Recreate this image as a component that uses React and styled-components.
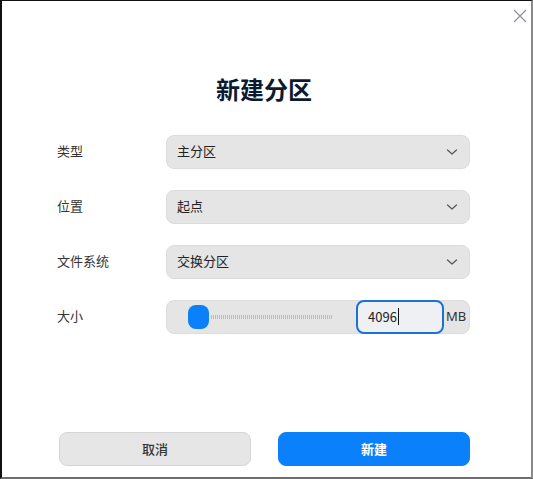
import React from "react";
import styled, { createGlobalStyle } from "styled-components";

const Global = createGlobalStyle`
  html, body { margin: 0; padding: 0; background: #fff; }
  body { font-family: "Noto Sans CJK SC", "Noto Sans", sans-serif; }
  * { box-sizing: border-box; }
`;

const Window = styled.div`
  width: 533px;
  height: 479px;
  position: relative;
  background: #fff;
  border-left: 2px solid #111;
  border-top: 1px solid #111;
  border-right: 2px solid #8a8a8a;
  border-bottom: 2px solid #6e6e6e;
  display: flex;
  flex-direction: column;
`;

const Close = styled.button`
  position: absolute;
  top: 6px;
  right: 2px;
  width: 18px;
  height: 18px;
  padding: 0;
  border: none;
  background: transparent;
  display: flex;
  align-items: center;
  justify-content: center;
`;

const Title = styled.h1`
  margin: 71px 0 0;
  text-align: center;
  font-size: 24px;
  line-height: 34px;
  font-weight: 700;
  color: #0b1a30;
  padding-right: 5px;
`;

const Form = styled.div`
  margin: 29px 0 0 55px;
  display: flex;
  flex-direction: column;
  gap: 21px;
`;

const Row = styled.div`
  display: flex;
  align-items: center;
  height: 34px;
`;

const Label = styled.div`
  width: 109px;
  font-size: 13px;
  line-height: 18px;
  padding-bottom: 3px;
  color: #333;
`;

const Field = styled.div`
  width: 304px;
  height: 34px;
  border-radius: 8px;
  background: #e5e5e5;
  border: 1px solid #dcdcdc;
  display: flex;
  align-items: center;
  padding: ${(p) => (p.$slider ? "0" : "0 10px 0 10px")};
  font-size: 13px;
  color: #222;
`;

const Value = styled.span`
  flex: 1;
  line-height: 18px;
  padding-bottom: 3px;
`;

const Thumb = styled.div`
  width: 21px;
  height: 24px;
  border-radius: 8px;
  background: #0a80fb;
  margin-left: 21px;
`;

const Track = styled.div`
  width: 122px;
  height: 4px;
  margin-left: 2px;
  background: repeating-linear-gradient(90deg, #bdbdbd 0 1px, transparent 1px 2px);
`;

const Input = styled.div`
  margin-left: 23px;
  width: 88px;
  height: 34px;
  border: 2px solid #1b72d3;
  border-radius: 8px;
  background: #eef0f4;
  display: flex;
  align-items: center;
  padding: 0 0 2px 10px;
  font-size: 13px;
  color: #222;
`;

const Caret = styled.span`
  display: inline-block;
  width: 1px;
  height: 17px;
  background: #111;
  margin-left: 1px;
`;

const Unit = styled.span`
  margin-left: 2px;
  font-size: 13px;
  color: #333;
  padding-bottom: 2px;
  font-family: "Noto Sans", sans-serif;
`;

const Buttons = styled.div`
  margin: auto 0 11px 57px;
  display: flex;
  gap: 27px;
`;

const Button = styled.button`
  width: 192px;
  height: 34px;
  border-radius: 8px;
  font-family: "Noto Sans CJK SC", "Noto Sans", sans-serif;
  font-size: 13px;
  padding-bottom: 3px;
  border: 1px solid ${(p) => (p.$primary ? "#0a80fb" : "#d6d6d6")};
  background: ${(p) => (p.$primary ? "#0a80fb" : "#e6e6e6")};
  color: ${(p) => (p.$primary ? "#fff" : "#333")};
  font-weight: ${(p) => (p.$primary ? 700 : 500)};
`;

const Chevron = () => (
  <svg width="14" height="14" viewBox="0 0 14 14" fill="none">
    <path d="M2.5 5 L7 9 L11.5 5" stroke="#555" strokeWidth="1.2" strokeLinecap="round" strokeLinejoin="round" />
  </svg>
);

const Select = ({ value }) => (
  <Field>
    <Value>{value}</Value>
    <Chevron />
  </Field>
);

export default function App() {
  return (
    <>
      <Global />
      <Window>
        <Close aria-label="close">
          <svg width="14" height="14" viewBox="0 0 14 14">
            <path d="M1 1 L13 13 M13 1 L1 13" stroke="#8a8f99" strokeWidth="1.1" />
          </svg>
        </Close>
        <Title>新建分区</Title>
        <Form>
          <Row>
            <Label>类型</Label>
            <Select value="主分区" />
          </Row>
          <Row>
            <Label>位置</Label>
            <Select value="起点" />
          </Row>
          <Row>
            <Label>文件系统</Label>
            <Select value="交换分区" />
          </Row>
          <Row>
            <Label>大小</Label>
            <Field $slider>
              <Thumb />
              <Track />
              <Input>
                4096
                <Caret />
              </Input>
              <Unit>MB</Unit>
            </Field>
          </Row>
        </Form>
        <Buttons>
          <Button>取消</Button>
          <Button $primary>新建</Button>
        </Buttons>
      </Window>
    </>
  );
}
